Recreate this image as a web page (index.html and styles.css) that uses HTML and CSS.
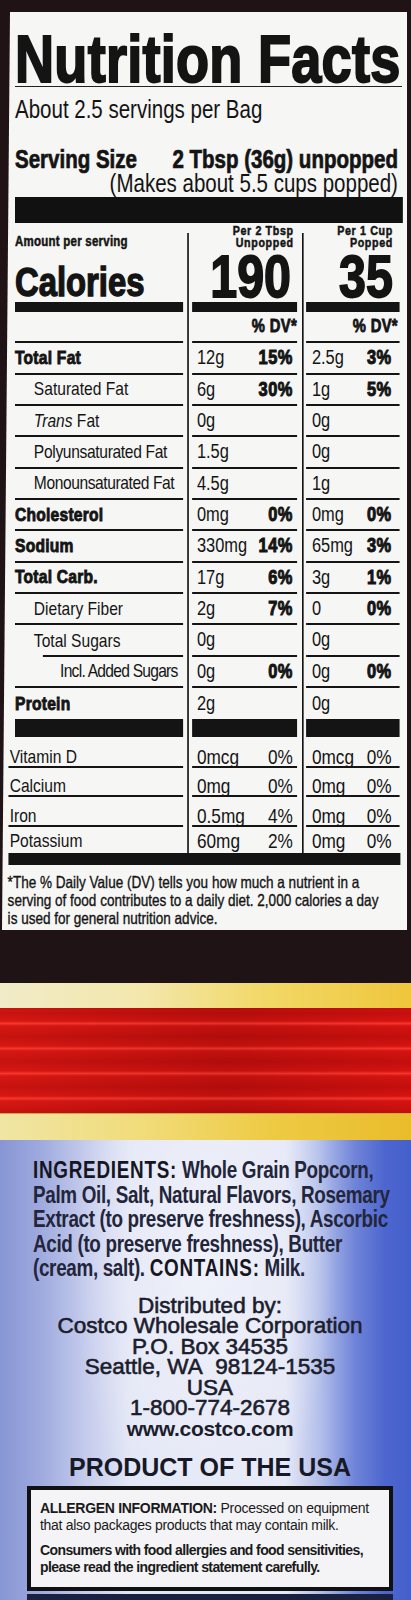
FILE: index.html
```html
<!DOCTYPE html>
<html lang="en">
<head>
<meta charset="utf-8">
<title>Nutrition Facts</title>
<link rel="stylesheet" href="styles.css">
</head>
<body>
<main class="pack">
  <section class="label">
    <div class="label-inner">
      <h1 class="title">Nutrition Facts</h1>
      <div class="servings">About 2.5 servings per Bag</div>
      <div class="serving-size"><span>Serving Size</span><span>2 Tbsp (36g) unpopped</span></div>
      <div class="makes">(Makes about 5.5 cups popped)</div>
      <div class="bar-thick"></div>

      <div class="table">
        <div class="col col-label">
          <div class="head head-label">
            <div class="amount">Amount per serving</div>
            <div class="calories">Calories</div>
          </div>
          <div class="bar"></div>
          <div class="row"></div>
          <div class="row b">Total Fat</div>
          <div class="row i1">Saturated Fat</div>
          <div class="row i1"><em>Trans</em>&nbsp;Fat</div>
          <div class="row i1 tight">Polyunsaturated Fat</div>
          <div class="row i1 tighter">Monounsaturated Fat</div>
          <div class="row b">Cholesterol</div>
          <div class="row b">Sodium</div>
          <div class="row b">Total Carb.</div>
          <div class="row i1">Dietary Fiber</div>
          <div class="row i1 short-line">Total Sugars</div>
          <div class="row i2 tightest">Incl. Added Sugars</div>
          <div class="row b nb">Protein</div>
          <div class="bar bar2"></div>
          <div class="vrow vr1 vl">Vitamin D</div>
          <div class="vrow vr2 vl">Calcium</div>
          <div class="vrow vr3 vl">Iron</div>
          <div class="vrow vr4 vl nb">Potassium</div>
        </div>
        <div class="vline"></div>
        <div class="col col-mid">
          <div class="head head-val">
            <div class="per"><div>Per 2 Tbsp</div><div>Unpopped</div></div>
            <div class="big">190</div>
          </div>
          <div class="bar"></div>
          <div class="row dvh">% DV*</div>
          <div class="row v"><span>12g</span><span class="dv">15%</span></div>
          <div class="row v"><span>6g</span><span class="dv">30%</span></div>
          <div class="row v"><span>0g</span></div>
          <div class="row v"><span>1.5g</span></div>
          <div class="row v"><span>4.5g</span></div>
          <div class="row v"><span>0mg</span><span class="dv">0%</span></div>
          <div class="row v"><span>330mg</span><span class="dv">14%</span></div>
          <div class="row v"><span>17g</span><span class="dv">6%</span></div>
          <div class="row v"><span>2g</span><span class="dv">7%</span></div>
          <div class="row v"><span>0g</span></div>
          <div class="row v"><span>0g</span><span class="dv">0%</span></div>
          <div class="row v nb"><span>2g</span></div>
          <div class="bar bar2"></div>
          <div class="vrow vr1 vv"><span>0mcg</span><span>0%</span></div>
          <div class="vrow vr2 vv"><span>0mg</span><span>0%</span></div>
          <div class="vrow vr3 vv"><span>0.5mg</span><span>4%</span></div>
          <div class="vrow vr4 vv nb"><span>60mg</span><span>2%</span></div>
        </div>
        <div class="vline vline-r"></div>
        <div class="col col-right">
          <div class="head head-val">
            <div class="per"><div>Per 1 Cup</div><div>Popped</div></div>
            <div class="big">35</div>
          </div>
          <div class="bar"></div>
          <div class="row dvh">% DV*</div>
          <div class="row v"><span>2.5g</span><span class="dv">3%</span></div>
          <div class="row v"><span>1g</span><span class="dv">5%</span></div>
          <div class="row v"><span>0g</span></div>
          <div class="row v"><span>0g</span></div>
          <div class="row v"><span>1g</span></div>
          <div class="row v"><span>0mg</span><span class="dv">0%</span></div>
          <div class="row v"><span>65mg</span><span class="dv">3%</span></div>
          <div class="row v"><span>3g</span><span class="dv">1%</span></div>
          <div class="row v"><span>0</span><span class="dv">0%</span></div>
          <div class="row v"><span>0g</span></div>
          <div class="row v"><span>0g</span><span class="dv">0%</span></div>
          <div class="row v nb"><span>0g</span></div>
          <div class="bar bar2"></div>
          <div class="vrow vr1 vv"><span>0mcg</span><span>0%</span></div>
          <div class="vrow vr2 vv"><span>0mg</span><span>0%</span></div>
          <div class="vrow vr3 vv"><span>0mg</span><span>0%</span></div>
          <div class="vrow vr4 vv nb"><span>0mg</span><span>0%</span></div>
        </div>
      </div>
      <div class="bar-bottom"></div>
      <p class="footnote">*The % Daily Value (DV) tells you how much a nutrient in a<br>serving of food contributes to a daily diet. 2,000 calories a day<br>is used for general nutrition advice.</p>
    </div>
  </section>

  <div class="gap"></div>
  <div class="stripe-yellow top"></div>
  <div class="stripe-red"></div>
  <div class="stripe-yellow bottom"></div>

  <section class="back">
    <p class="ingredients"><strong>INGREDIENTS:</strong> Whole Grain Popcorn,<br>Palm Oil, Salt, Natural Flavors, Rosemary<br>Extract (to preserve freshness), Ascorbic<br>Acid (to preserve freshness), Butter<br>(cream, salt). <strong>CONTAINS:</strong> Milk.</p>
    <div class="distributor">
      <div>Distributed by:</div>
      <div>Costco Wholesale Corporation</div>
      <div>P.O. Box 34535</div>
      <div>Seattle, WA&nbsp; 98124-1535</div>
      <div>USA</div>
      <div>1-800-774-2678</div>
      <div class="web">www.costco.com</div>
    </div>
    <div class="origin">PRODUCT OF THE USA</div>
    <div class="allergen">
      <p><strong>ALLERGEN INFORMATION:</strong> Processed on equipment<br>that also packages products that may contain milk.</p>
      <p class="consumers">Consumers with food allergies and food sensitivities,<br>please read the ingredient statement carefully.</p>
    </div>
    <div class="edge"></div>
  </section>
</main>
</body>
</html>
```
FILE: styles.css
```css
* { box-sizing: border-box; margin: 0; padding: 0; }

body {
  margin: 0;
  width: 411px;
  overflow-x: hidden;
  background: #1f1315;
  color: #141414;
  font-family: "Liberation Sans", Arial, sans-serif;
}

.pack { display: flex; flex-direction: column; width: 411px; overflow: hidden; }

/* ---------- Nutrition label ---------- */
/* The label face is condensed: it is laid out in Arial metrics and squeezed to 82% width. */
.label {
  margin: 12px 4px 0 2px;
  width: 405px;
  height: 918px;
  flex: none;
  background: #f6f6f4;
  clip-path: polygon(8px 0, 100% 0, 100% 100%, 0 100%);
  overflow: hidden;
  padding: 20px 0 0 13px;
}

.label-inner {
  width: 472px;
  display: flex;
  flex-direction: column;
  transform: scaleX(0.82);
  transform-origin: 0 0;
  white-space: nowrap;
}

.title {
  font-size: 66px;
  line-height: 54px;
  font-weight: 700;
  letter-spacing: 0.3px;
  -webkit-text-stroke: 2px #141414;
  border-bottom: 1.5px solid #222;
}

.servings {
  font-size: 25px;
  line-height: 28px;
  margin-top: 8px;
}

.serving-size {
  display: flex;
  justify-content: space-between;
  font-weight: 700;
  font-size: 25px;
  line-height: 26px;
  margin-top: 23px;
  padding-right: 5px;
  -webkit-text-stroke: 0.7px #141414;
}

.makes {
  text-align: right;
  font-size: 25px;
  line-height: 24px;
  margin-top: -1px;
  padding-right: 5px;
}

.bar-thick {
  height: 26px;
  margin: 2px -1px 0 0;
  background: #111;
  flex: none;
}

.table {
  display: flex;
  height: 630px;
  flex: none;
}

.col { display: flex; flex-direction: column; flex: none; }
.col-label { width: 205px; }
.col-mid { width: 128px; }
.col-right { width: 114.6px; }

.vline {
  width: 2.4px;
  flex: none;
  background: #141414;
  margin: 10px 3.7px 0 4.8px;
}
.vline-r { margin: 10px 2.5px 0 6px; }

.head { height: 79px; display: flex; flex-direction: column; flex: none; justify-content: space-between; }

.amount {
  font-size: 14px;
  line-height: 13px;
  font-weight: 700;
  margin-top: 12px;
  letter-spacing: 0.3px;
  -webkit-text-stroke: 0.5px #141414;
}

.calories {
  font-size: 40px;
  line-height: 40px;
  font-weight: 700;
  -webkit-text-stroke: 1.4px #141414;
}

.per {
  font-size: 13px;
  line-height: 11.5px;
  font-weight: 700;
  letter-spacing: 0.8px;
  text-align: right;
  padding: 2px 4px 0 0;
  -webkit-text-stroke: 0.5px #141414;
}
.col-right .per { padding-right: 8.5px; }

.big {
  font-size: 59px;
  line-height: 50px;
  font-weight: 700;
  text-align: right;
  padding-right: 7.3px;
  -webkit-text-stroke: 1.8px #141414;
}
.col-right .big { padding-right: 8.5px; }

.bar { height: 10px; background: #141414; flex: none; }
.bar2 { height: 18px; }

.row {
  height: 31.33px;
  flex: none;
  border-bottom: 2px solid #141414;
  display: flex;
  align-items: center;
  font-size: 19px;
}

.row.b { font-weight: 700; letter-spacing: 0.3px; -webkit-text-stroke: 0.9px #141414; }
.row.i1 { padding-left: 23px; }
.row.i2 { padding-left: 55px; }
.row.tight { letter-spacing: -0.4px; }
.row.tighter { letter-spacing: -0.5px; }
.row.tightest { letter-spacing: -0.9px; }
.row em { font-style: italic; }

.row.short-line {
  border-bottom: none;
  background: linear-gradient(#141414, #141414) no-repeat 34px 100% / calc(100% - 34px) 2px;
}

.nb { border-bottom: none !important; }

.dvh {
  justify-content: flex-end;
  font-weight: 700;
  font-size: 18px;
  letter-spacing: 0.4px;
  -webkit-text-stroke: 0.8px #141414;
}
.col-right .dvh { padding-right: 2.4px; }

.row.v {
  justify-content: space-between;
  padding: 0 5px 0 6px;
  font-size: 20px;
}
.col-right .row.v { padding: 0 10px 0 7.3px; }

.dv { font-weight: 700; letter-spacing: 0.6px; -webkit-text-stroke: 1px #141414; }

.vrow {
  flex: none;
  border-bottom: 2px solid #141414;
  display: flex;
  align-items: flex-end;
  line-height: 19px;
  font-size: 19px;
}
.vr1 { height: 30.5px; }
.vr2 { height: 29px; }
.vr3 { height: 30px; }
.vr4 { height: 26px; padding-bottom: 3px; }

.vl { margin-left: -8px; padding-left: 1.5px; }
.vv { justify-content: space-between; padding-left: 6px; padding-right: 5px; font-size: 21px; }
.col-right .vv { padding-left: 7.3px; padding-right: 10px; }

.bar-bottom {
  height: 12px;
  flex: none;
  background: #141414;
  margin: 0 2.4px 0 -8.5px;
}

.footnote {
  margin: 8px 0 0 -9px;
  font-size: 16.5px;
  line-height: 18px;
  -webkit-text-stroke: 0.35px #141414;
}

/* ---------- Package stripes ---------- */
.gap { height: 53px; flex: none; }

.stripe-yellow { flex: none; }
.stripe-yellow.top {
  height: 25px;
  background: linear-gradient(90deg, #f1ebc8 0%, #f3e7ab 35%, #f2d866 65%, #efc63c 100%);
}
.stripe-yellow.bottom {
  height: 27px;
  background: linear-gradient(90deg, #f0e5a4 0%, #f1dc7a 35%, #eecb45 65%, #e9bc2a 100%);
  border-top: 1px solid #c9a94a;
}

.stripe-red {
  height: 105px;
  flex: none;
  background:
    linear-gradient(90deg, rgba(255, 60, 40, 0.12) 0%, rgba(0, 0, 0, 0.08) 55%, rgba(255, 40, 30, 0.06) 100%),
    repeating-linear-gradient(180deg, #bf0d0c 0px, #d11310 9px, #f7352c 11.5px, #d11310 14px, #bf0d0c 25px);
  background-position: 0 0, 0 4px;
}

/* ---------- Back panel ---------- */
.back {
  height: 460px;
  flex: none;
  display: flex;
  flex-direction: column;
  padding-top: 18px;
  overflow: hidden;
  color: #1c1d2c;
  background:
    radial-gradient(ellipse 130px 300px at 205px 120px, rgba(240, 242, 250, 0.9), rgba(240, 242, 250, 0) 100%),
    linear-gradient(90deg, #8795d4 0px, #9eaade 40px, #c4cbec 85px, #e2e6f5 130px, #e5e8f6 285px, #b3bfea 320px, #6f84d8 355px, #4d66cf 385px, #4560cb 411px);
}

.ingredients {
  margin-left: 33px;
  width: 440px;
  white-space: nowrap;
  transform: scaleX(0.82);
  transform-origin: 0 0;
  font-size: 23px;
  line-height: 24.5px;
  font-weight: 700;
  letter-spacing: -0.4px;
  color: #23253a;
}
.ingredients strong { color: #15161f; letter-spacing: 0.9px; }

.distributor {
  margin-top: 15px;
  padding-left: 9px;
  text-align: center;
  font-size: 22.5px;
  line-height: 20.5px;
  -webkit-text-stroke: 0.6px #1c1d2c;
}
.distributor .web { font-weight: 700; font-size: 21px; -webkit-text-stroke: 0; letter-spacing: -0.3px; }

.origin {
  margin-top: 14px;
  padding-left: 9px;
  text-align: center;
  font-size: 25px;
  line-height: 28px;
  font-weight: 700;
  color: #181926;
}

.allergen {
  margin: 5px 0 0 27px;
  width: 366px;
  height: 105px;
  flex: none;
  border: 4px solid #111;
  background: #f4f4f6;
  padding: 10px 8px 0 9px;
  font-size: 14px;
  line-height: 17px;
  letter-spacing: -0.3px;
  white-space: nowrap;
  color: #1a1a1a;
}
.allergen .consumers { margin-top: 8px; font-weight: 700; letter-spacing: -0.6px; }

.edge {
  margin-top: 3px;
  margin-left: 27px;
  width: 366px;
  height: 10px;
  flex: none;
  background: #1a2040;
}
```
